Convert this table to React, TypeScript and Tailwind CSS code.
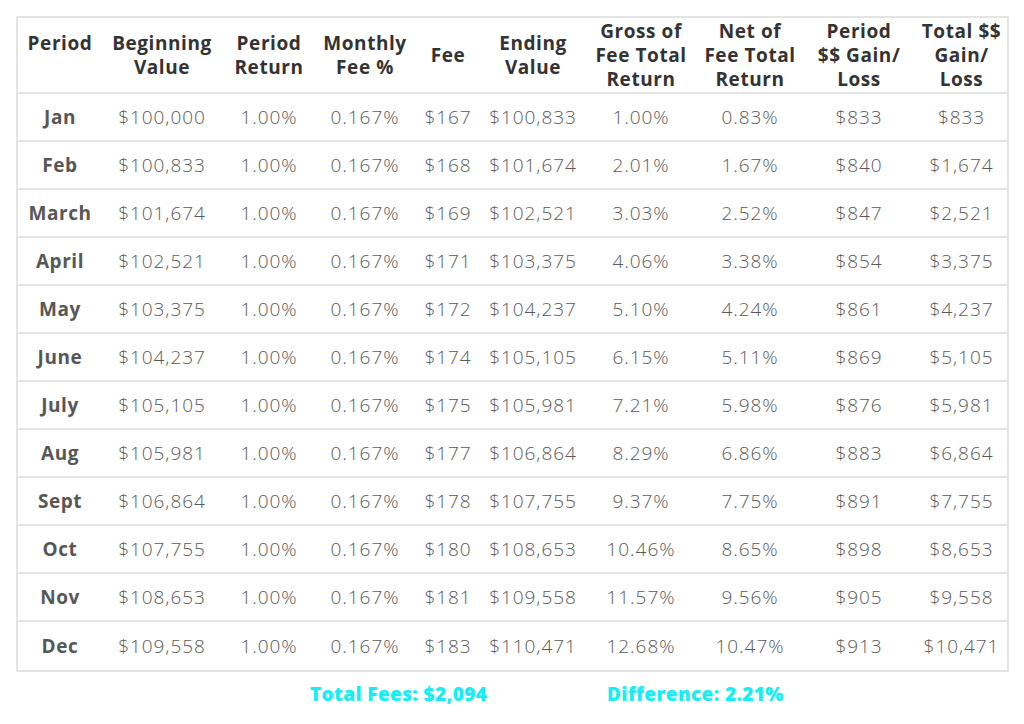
import React from "react";

type Row = [string, string, string, string, string, string, string, string, string, string];

const rows: Row[] = [
  ["Jan", "$100,000", "1.00%", "0.167%", "$167", "$100,833", "1.00%", "0.83%", "$833", "$833"],
  ["Feb", "$100,833", "1.00%", "0.167%", "$168", "$101,674", "2.01%", "1.67%", "$840", "$1,674"],
  ["March", "$101,674", "1.00%", "0.167%", "$169", "$102,521", "3.03%", "2.52%", "$847", "$2,521"],
  ["April", "$102,521", "1.00%", "0.167%", "$171", "$103,375", "4.06%", "3.38%", "$854", "$3,375"],
  ["May", "$103,375", "1.00%", "0.167%", "$172", "$104,237", "5.10%", "4.24%", "$861", "$4,237"],
  ["June", "$104,237", "1.00%", "0.167%", "$174", "$105,105", "6.15%", "5.11%", "$869", "$5,105"],
  ["July", "$105,105", "1.00%", "0.167%", "$175", "$105,981", "7.21%", "5.98%", "$876", "$5,981"],
  ["Aug", "$105,981", "1.00%", "0.167%", "$177", "$106,864", "8.29%", "6.86%", "$883", "$6,864"],
  ["Sept", "$106,864", "1.00%", "0.167%", "$178", "$107,755", "9.37%", "7.75%", "$891", "$7,755"],
  ["Oct", "$107,755", "1.00%", "0.167%", "$180", "$108,653", "10.46%", "8.65%", "$898", "$8,653"],
  ["Nov", "$108,653", "1.00%", "0.167%", "$181", "$109,558", "11.57%", "9.56%", "$905", "$9,558"],
  ["Dec", "$109,558", "1.00%", "0.167%", "$183", "$110,471", "12.68%", "10.47%", "$913", "$10,471"],
];

const headers: string[][] = [
  ["Period"],
  ["Beginning", "Value"],
  ["Period", "Return"],
  ["Monthly", "Fee %"],
  ["Fee"],
  ["Ending", "Value"],
  ["Gross of", "Fee Total", "Return"],
  ["Net of", "Fee Total", "Return"],
  ["Period", "$$ Gain/", "Loss"],
  ["Total $$", "Gain/", "Loss"],
];

const grid = "grid grid-cols-[84px_120px_94px_98px_68px_102px_114px_104px_114px_91px]";

export default function App() {
  return (
    <div className="w-[1024px] h-[724px] bg-white pt-4 pl-4 font-['Open_Sans',sans-serif]">
      <div className="w-[993px] border-2 border-[#e4e4e4]">
        <div className={`${grid} h-[76px] border-b-2 border-[#e4e4e4]`}>
          {headers.map((h, i) => (
            <div
              key={i}
              className={`flex flex-col items-center text-center text-[19px] font-bold leading-[24px] tracking-[0.03em] text-[#333] ${
                i === 0 ? "justify-start pt-[13px]" : "justify-center"
              }`}
            >
              {h.map((l) => (
                <span key={l} className="whitespace-nowrap">{l}</span>
              ))}
            </div>
          ))}
        </div>
        {rows.map((r, ri) => (
          <div
            key={r[0]}
            className={`${grid} h-[48px] ${ri < rows.length - 1 ? "border-b-2 border-[#e4e4e4]" : ""}`}
          >
            {r.map((c, ci) => (
              <div
                key={ci}
                className={`flex items-center justify-center whitespace-nowrap ${
                  ci === 0
                    ? "text-[19px] font-bold text-[#575757] tracking-[0.03em]"
                    : "text-[19px] font-light text-[#5a5a5a] tracking-[0.05em]"
                }`}
              >
                {c}
              </div>
            ))}
          </div>
        ))}
      </div>
      <div className="flex pl-[294px] pt-[8px] text-[19px] font-extrabold tracking-[0.02em] text-[#14eef4]">
        <span className="w-[297px]">Total Fees: $2,094</span>
        <span>Difference: 2.21%</span>
      </div>
    </div>
  );
}
